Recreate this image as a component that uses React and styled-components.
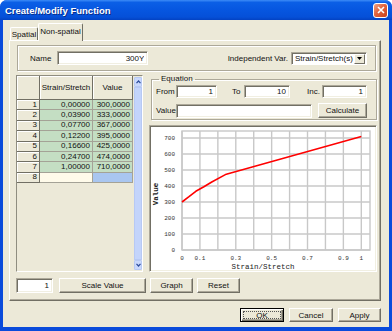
import React from "react";
import styled, { createGlobalStyle } from "styled-components";

const colors = {
  face: "#ECE9D8",
  light: "#FFFFFF",
  shadow: "#ACA899",
  dark: "#716F64",
  soft: "#F1EFE2",
  frameBlue: "#0A4BDB",
  green: "#C4DEC3",
  cream: "#FFFBEA",
  select: "#A9C6F0",
  scroll: "#C3D4FB",
};

const GlobalStyle = createGlobalStyle`
  html, body {
    margin: 0;
    padding: 0;
    background: #ffffff;
  }
  body {
    font-family: "Liberation Sans", Arial, sans-serif;
    font-size: 8px;
    color: #111;
  }
`;

const Window = styled.div`
  width: 392px;
  height: 331px;
  display: flex;
  flex-direction: column;
  background: ${colors.frameBlue};
  border-radius: 7px 7px 0 0;
  overflow: hidden;
  box-sizing: border-box;
`;

const TitleBar = styled.div`
  height: 20px;
  flex-shrink: 0;
  display: flex;
  align-items: center;
  justify-content: space-between;
  padding: 0 4px 0 5px;
  background: linear-gradient(
    to bottom,
    #3d8cf7 0%,
    #0b5fe6 12%,
    #0656e0 50%,
    #0550d8 85%,
    #0342c2 100%
  );
`;

const Title = styled.span`
  color: #fff;
  font-weight: bold;
  font-size: 9.5px;
  text-shadow: 1px 1px 0 #0a2e8a;
`;

const CloseButton = styled.div`
  width: 13px;
  height: 13px;
  border: 1px solid #fff;
  border-radius: 3px;
  background: linear-gradient(135deg, #f0a285 0%, #e2643e 45%, #c9401a 100%);
  display: flex;
  align-items: center;
  justify-content: center;
`;

const Body = styled.div`
  flex: 1;
  margin: 0 3px 4px 3px;
  background: ${colors.face};
  display: flex;
  flex-direction: column;
  padding: 3px 8px 5px 6px;
`;

const TabStrip = styled.div`
  height: 17px;
  display: flex;
  align-items: flex-end;
  padding-left: 1px;
  position: relative;
  z-index: 1;
`;

const Tab = styled.div`
  height: ${(p) => (p.$active ? 18 : 13)}px;
  margin-bottom: ${(p) => (p.$active ? -1 : 0)}px;
  width: ${(p) => p.$w}px;
  box-sizing: border-box;
  background: ${colors.face};
  border-top: 1px solid ${colors.light};
  border-left: 1px solid ${colors.light};
  border-right: 1px solid ${colors.dark};
  border-radius: 2px 2px 0 0;
  display: flex;
  align-items: ${(p) => (p.$active ? "flex-start" : "center")};
  justify-content: center;
  padding-top: ${(p) => (p.$active ? 3 : 0)}px;
  white-space: nowrap;
`;

const Panel = styled.div`
  height: 261px;
  box-sizing: border-box;
  border-top: 1px solid ${colors.light};
  border-left: 1px solid ${colors.light};
  border-right: 1px solid ${colors.dark};
  border-bottom: 1px solid ${colors.dark};
  box-shadow: inset -1px -1px ${colors.shadow};
  padding: 4px 3px 6px 6px;
  display: flex;
  flex-direction: column;
`;

const HeaderFrame = styled.div`
  height: 26px;
  box-sizing: border-box;
  margin: 0 1px 0 1px;
  border: 1px solid ${colors.shadow};
  box-shadow: inset 1px 1px ${colors.light}, 1px 1px ${colors.light};
  display: flex;
  align-items: center;
  padding: 0 8px 0 12px;
`;

const Label = styled.span`
  width: ${(p) => (p.$w ? `${p.$w}px` : "auto")};
  padding-left: ${(p) => p.$pl || 0}px;
  box-sizing: border-box;
  flex-shrink: 0;
  white-space: nowrap;
`;

const Spacer = styled.div`
  flex: 1;
`;

const Input = styled.input`
  box-sizing: border-box;
  width: ${(p) => p.$w}px;
  height: ${(p) => p.$h || 13}px;
  margin-left: ${(p) => p.$ml || 0}px;
  border: 1px solid;
  border-color: ${colors.shadow} ${colors.light} ${colors.light} ${colors.shadow};
  box-shadow: inset 1px 1px ${colors.dark}, inset -1px -1px ${colors.soft};
  background: #fff;
  font: inherit;
  color: #111;
  text-align: right;
  padding: 0 3px;
  outline: none;
`;

const Combo = styled.div`
  box-sizing: border-box;
  width: 76px;
  height: 13px;
  margin-left: 3px;
  border: 1px solid;
  border-color: ${colors.shadow} ${colors.light} ${colors.light} ${colors.shadow};
  box-shadow: inset 1px 1px ${colors.dark};
  background: #fff;
  display: flex;
  align-items: center;
  padding: 1px 1px 0 3px;
`;

const ComboText = styled.span`
  flex: 1;
  white-space: nowrap;
  overflow: hidden;
`;

const ComboArrow = styled.div`
  width: 11px;
  height: 10px;
  flex-shrink: 0;
  box-sizing: border-box;
  background: ${colors.face};
  border: 1px solid;
  border-color: ${colors.light} ${colors.dark} ${colors.dark} ${colors.light};
  display: flex;
  align-items: center;
  justify-content: center;
`;

const MainRow = styled.div`
  margin-top: 4px;
  height: 197px;
  display: flex;
  gap: 6px;
`;

const GridBox = styled.div`
  width: 127px;
  box-sizing: border-box;
  border: 1px solid;
  border-color: #8f8d80 ${colors.light} ${colors.light} #8f8d80;
  display: flex;
  background: ${colors.face};
`;

const Table = styled.div`
  display: grid;
  grid-template-columns: 23px 53px 40px;
  grid-template-rows: 24px repeat(8, 10.4px);
  align-content: start;
`;

const HeadCell = styled.div`
  box-sizing: border-box;
  background: ${colors.face};
  border-right: 1px solid ${colors.dark};
  border-bottom: 1px solid ${colors.dark};
  box-shadow: inset 1px 1px ${colors.light};
  display: flex;
  align-items: center;
  justify-content: center;
  white-space: nowrap;
  overflow: hidden;
`;

const RowHead = styled.div`
  box-sizing: border-box;
  background: ${colors.face};
  border-right: 1px solid ${colors.dark};
  border-bottom: 1px solid ${colors.dark};
  box-shadow: inset 1px 1px ${colors.light};
  display: flex;
  align-items: center;
  justify-content: flex-end;
  padding-right: 2px;
  line-height: 1;
`;

const Cell = styled.div`
  box-sizing: border-box;
  background: ${(p) => p.$bg};
  border-right: 1px solid #a4a296;
  border-bottom: 1px solid #a4a296;
  display: flex;
  align-items: center;
  justify-content: flex-end;
  padding-right: 2px;
  line-height: 1;
`;

const ScrollBar = styled.div`
  width: 9px;
  margin: 1px 0 1px 1px;
  display: flex;
  flex-direction: column;
`;

const ScrollButton = styled.div`
  height: 10px;
  box-sizing: border-box;
  border: 1px solid #b7c9f4;
  border-radius: 1px;
  background: #c9d8fc;
  display: flex;
  align-items: center;
  justify-content: center;
`;

const ScrollTrack = styled.div`
  flex: 1;
  box-sizing: border-box;
  border: 1px solid #b7c9f4;
  background: ${colors.scroll};
`;

const RightCol = styled.div`
  flex: 1;
  display: flex;
  flex-direction: column;
`;

const Group = styled.fieldset`
  margin: 0 0 0 2px;
  height: 50px;
  box-sizing: border-box;
  border: 1px solid ${colors.shadow};
  box-shadow: inset 1px 1px ${colors.light}, 1px 1px ${colors.light};
  padding: 0 7px 0 4px;
  display: flex;
  flex-direction: column;
`;

const Legend = styled.legend`
  padding: 0 2px;
  margin-left: 3px;
  line-height: 1;
`;

const EqRow = styled.div`
  display: flex;
  align-items: center;
  height: ${(p) => p.$h}px;
  margin-top: ${(p) => p.$mt}px;
`;

const Button = styled.button`
  box-sizing: border-box;
  width: ${(p) => p.$w}px;
  height: ${(p) => p.$h || 15}px;
  margin-left: ${(p) => p.$ml || 0}px;
  padding: 0;
  font: inherit;
  color: #111;
  background: ${colors.face};
  border: 1px solid;
  border-color: ${colors.light} ${colors.dark} ${colors.dark} ${colors.light};
  box-shadow: inset -1px -1px ${colors.shadow};
`;

const DefaultButton = styled(Button)`
  border: 1px solid #000;
  box-shadow: inset 1px 1px ${colors.light}, inset -1px -1px ${colors.dark},
    inset -2px -2px ${colors.shadow};
  outline: 1px dotted #555;
  outline-offset: -4px;
`;

const ChartBox = styled.div`
  margin-top: 5px;
  flex: 1;
  box-sizing: border-box;
  background: #fff;
  border: 1px solid;
  border-color: ${colors.shadow} ${colors.light} ${colors.light} ${colors.shadow};
  box-shadow: inset 1px 1px ${colors.dark}, inset -1px -1px ${colors.soft};
  padding: 1px;
  display: flex;
`;

const BottomRow = styled.div`
  margin-top: 6px;
  height: 15px;
  display: flex;
  gap: 4px;
`;

const Footer = styled.div`
  margin-top: 7px;
  display: flex;
  justify-content: flex-end;
  gap: 5px;
`;

const rows = [
  ["0,00000", "300,0000"],
  ["0,03900", "333,0000"],
  ["0,07700", "367,0000"],
  ["0,12200", "395,0000"],
  ["0,16600", "425,0000"],
  ["0,24700", "474,0000"],
  ["1,00000", "710,0000"],
];

const points = [
  [0, 300],
  [0.039, 333],
  [0.077, 367],
  [0.122, 395],
  [0.166, 425],
  [0.247, 474],
  [1, 710],
];

// chart geometry, in svg units (1:1 with screen px)
const X0 = 31;
const XS = 179.3;
const Y0 = 123;
const YS = 0.16;
const sx = (v) => X0 + v * XS;
const sy = (v) => Y0 - v * YS;

function Chart() {
  const vLines = Array.from({ length: 11 }, (_, i) => sx(i / 10));
  const hLines = Array.from({ length: 8 }, (_, i) => sy(i * 100));
  const xLabels = [
    ["0", 0],
    ["0.1", 0.1],
    ["0.3", 0.3],
    ["0.5", 0.5],
    ["0.7", 0.7],
    ["0.9", 0.9],
    ["1", 1],
  ];
  return (
    <svg width="223" height="143" viewBox="0 0 223 143">
      <g stroke="#c8c8c8" strokeWidth="1.4">
        {vLines.map((x) => (
          <line key={x} x1={x} y1={4} x2={x} y2={Y0} />
        ))}
        {hLines.map((y) => (
          <line key={y} x1={X0} y1={y} x2={219} y2={y} />
        ))}
        <rect x={X0} y={4} width={219 - X0} height={Y0 - 4} fill="none" />
      </g>
      <g fontFamily="'Liberation Mono', monospace" fontSize="6" fill="#333">
        {hLines.map((y, i) => (
          <text key={y} x={24} y={y + 2} textAnchor="end">
            {i * 100}
          </text>
        ))}
        {xLabels.map(([t, v]) => (
          <text key={t} x={sx(v)} y={133} textAnchor="middle">
            {t}
          </text>
        ))}
      </g>
      <text
        x={112}
        y={141.5}
        textAnchor="middle"
        fontFamily="'Liberation Mono', monospace"
        fontSize="7.5"
        fill="#222"
      >
        Strain/Stretch
      </text>
      <text
        transform="translate(6.5 67) rotate(-90)"
        textAnchor="middle"
        fontFamily="'Liberation Mono', monospace"
        fontSize="7.5"
        fontWeight="bold"
        fill="#222"
      >
        Value
      </text>
      <polyline
        points={points.map(([x, y]) => `${sx(x)},${sy(y)}`).join(" ")}
        fill="none"
        stroke="#ff0000"
        strokeWidth="1.6"
        strokeLinejoin="round"
      />
    </svg>
  );
}

export default function App() {
  return (
    <Window>
      <GlobalStyle />
      <TitleBar>
        <Title>Create/Modify Function</Title>
        <CloseButton>
          <svg width="8" height="8" viewBox="0 0 8 8">
            <path d="M1 1 L7 7 M7 1 L1 7" stroke="#fff" strokeWidth="1.6" />
          </svg>
        </CloseButton>
      </TitleBar>

      <Body>
        <TabStrip>
          <Tab $w={28}>Spatial</Tab>
          <Tab $w={45} $active>
            Non-spatial
          </Tab>
        </TabStrip>

        <Panel>
          <HeaderFrame>
            <Label>Name</Label>
            <Input $w={91} $h={14} $ml={6} value="300Y" readOnly />
            <Spacer />
            <Label>Independent Var.</Label>
            <Combo>
              <ComboText>Strain/Stretch(s)</ComboText>
              <ComboArrow>
                <svg width="5" height="3" viewBox="0 0 5 3">
                  <path d="M0 0 H5 L2.5 3 Z" fill="#000" />
                </svg>
              </ComboArrow>
            </Combo>
          </HeaderFrame>

          <MainRow>
            <GridBox>
              <Table>
                <HeadCell />
                <HeadCell>Strain/Stretch</HeadCell>
                <HeadCell>Value</HeadCell>
                {rows.map(([s, v], i) => (
                  <React.Fragment key={i}>
                    <RowHead>{i + 1}</RowHead>
                    <Cell $bg={colors.green}>{s}</Cell>
                    <Cell $bg={colors.green}>{v}</Cell>
                  </React.Fragment>
                ))}
                <RowHead>8</RowHead>
                <Cell $bg={colors.cream} />
                <Cell $bg={colors.select} />
              </Table>
              <ScrollBar>
                <ScrollButton>
                  <svg width="5" height="4" viewBox="0 0 5 4">
                    <path d="M0.5 3.2 L2.5 1 L4.5 3.2" fill="none" stroke="#2c4c9a" strokeWidth="1.2" />
                  </svg>
                </ScrollButton>
                <ScrollTrack />
                <ScrollButton>
                  <svg width="5" height="4" viewBox="0 0 5 4">
                    <path d="M0.5 0.8 L2.5 3 L4.5 0.8" fill="none" stroke="#2c4c9a" strokeWidth="1.2" />
                  </svg>
                </ScrollButton>
              </ScrollBar>
            </GridBox>

            <RightCol>
              <Group>
                <Legend>Equation</Legend>
                <EqRow $h={13} $mt={2}>
                  <Label $w={20}>From</Label>
                  <Input $w={41} value="1" readOnly />
                  <Label $w={27} $pl={15}>
                    To
                  </Label>
                  <Input $w={46} value="10" readOnly />
                  <Label $w={32} $pl={17}>
                    Inc.
                  </Label>
                  <Input $w={45} value="1" readOnly />
                </EqRow>
                <EqRow $h={15} $mt={5}>
                  <Label $w={20}>Value</Label>
                  <Input $w={136} $h={14} value="" readOnly />
                  <Button $w={49} $ml={6}>
                    Calculate
                  </Button>
                </EqRow>
              </Group>
              <ChartBox>
                <Chart />
              </ChartBox>
            </RightCol>
          </MainRow>

          <BottomRow>
            <Input $w={37} $h={15} value="1" readOnly />
            <Button $w={87} $ml={2}>
              Scale Value
            </Button>
            <Button $w={43}>Graph</Button>
            <Button $w={43}>Reset</Button>
          </BottomRow>
        </Panel>

        <Footer>
          <DefaultButton $w={44} $h={14}>
            OK
          </DefaultButton>
          <Button $w={44} $h={14}>
            Cancel
          </Button>
          <Button $w={43} $h={14}>
            Apply
          </Button>
        </Footer>
      </Body>
    </Window>
  );
}
